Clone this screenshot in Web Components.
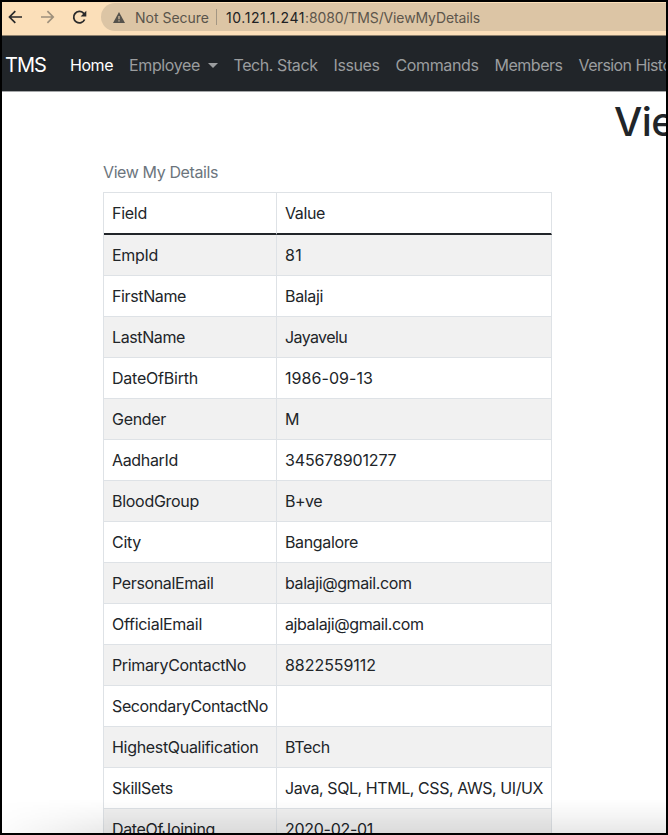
<!DOCTYPE html>
<html lang="en">
<head>
<meta charset="utf-8">
<title>View My Details</title>
<style>
html, body { margin: 0; height: 100%; overflow: hidden; }
body { font-family: Inter, "Liberation Sans", sans-serif; font-size: 16px; color: #212529; }
</style>
</head>
<body>
<tms-window></tms-window>
<script>
function shadow(el, html) {
  el.attachShadow({ mode: "open" }).innerHTML = html;
  return el.shadowRoot;
}

/* A single line of text tracked to an exact width. */
class FitText extends HTMLElement {
  connectedCallback() {
    if (this.shadowRoot) return;
    const root = shadow(this, `<style>
      :host { display: block; flex: none; white-space: nowrap; }
      span { display: inline-block; }
    </style><span><slot></slot></span>`);
    const w = parseFloat(this.getAttribute("w"));
    const span = root.querySelector("span");
    if (w) {
      const natural = span.getBoundingClientRect().width;
      span.style.letterSpacing = (w - natural) / this.textContent.length + "px";
    }
  }
}

class BrowserBar extends HTMLElement {
  connectedCallback() {
    shadow(this, `<style>
      :host { display: flex; height: 34px; box-sizing: border-box; background: #fbdfb9; border-bottom: 1px solid #8d806d; flex: none; padding-top: 1px; }
      svg { display: block; flex: none; }
      .icons { width: 99px; height: 29px; }
      .pill { flex: 1; height: 28px; background: #dcc5a5; border-radius: 14px 0 0 14px; display: flex; align-items: center; padding-left: 12px; font-size: 14px; color: #59544b; }
      .warn { margin-right: 10px; }
      .rule { width: 1px; height: 16px; background: #a39683; margin: 0 9px 0 7px; }
      .host { color: #202124; }
      .path { color: #5d564c; }
    </style>
    <svg class="icons" viewBox="2 3 99 29" fill="none" stroke-width="1.7">
      <path d="M22 17H9.8M15.3 11.2L9.5 17l5.800 5.800" stroke="#29292a"/>
      <path d="M41 17h12M47.400 11.200L53.200 17l-5.800 5.800" stroke="#9e907c"/>
      <path d="M84.600 19.500A5.700 5.700 0 1 1 83.500 13.200L85 14.800" stroke="#29292a" stroke-width="1.800"/>
      <path d="M86.300 10.800v5.700h-5.700z" fill="#29292a"/>
    </svg>
    <div class="pill">
      <svg class="warn" width="12" height="11" viewBox="0 0 12 11"><path d="M6 0l6 11H0z" fill="#55524c"/><path d="M6 4v3.200M6 8.300v1.300" stroke="#dcc5a5" stroke-width="1.200"/></svg>
      <fit-text w="74">Not Secure</fit-text>
      <span class="rule"></span>
      <fit-text class="host" w="79">10.121.1.241</fit-text>
      <fit-text class="path" w="175">:8080/TMS/ViewMyDetails</fit-text>
    </div>`);
  }
}

class NavBar extends HTMLElement {
  connectedCallback() {
    shadow(this, `<style>
      :host { display: flex; align-items: center; height: 56px; flex: none; background: #212529; border-bottom: 1px solid #a5a7a9; box-sizing: border-box; overflow: hidden; padding: 3px 0 0 3px; color: #9b9d9f; }
      .brand { font-size: 20px; color: #fff; margin-right: 24px; }
      .active { color: #fff; }
      fit-text + fit-text { margin-right: 16px; }
      .drop { display: flex; align-items: center; margin-right: 15.500px; }
      .caret { margin-left: 8px; border: 5px solid transparent; border-top-color: currentColor; border-bottom: 0; }
      .link { margin-right: 16px; }
    </style>
    <fit-text class="brand" w="41">TMS</fit-text>
    <fit-text class="active" w="43">Home</fit-text>
    <div class="drop"><fit-text w="71">Employee</fit-text><span class="caret"></span></div>
    <fit-text class="link" w="84">Tech. Stack</fit-text>
    <fit-text class="link" w="46">Issues</fit-text>
    <fit-text class="link" w="83">Commands</fit-text>
    <fit-text class="link" w="68">Members</fit-text>
    <fit-text class="link" w="107">Version History</fit-text>`);
  }
}

class DetailsTable extends HTMLElement {
  connectedCallback() {
    const rows = [
      ["EmpId", 46, "81", 17], ["FirstName", 74, "Balaji", 38], ["LastName", 73, "Jayavelu", 62],
      ["DateOfBirth", 86, "1986-09-13", 88], ["Gender", 54, "M", 14], ["AadharId", 66, "345678901277", 111.5],
      ["BloodGroup", 87, "B+ve", 37], ["City", 29, "Bangalore", 73], ["PersonalEmail", 101.5, "balaji@gmail.com", 126.5],
      ["OfficialEmail", 90, "ajbalaji@gmail.com", 138.5], ["PrimaryContactNo", 134, "8822559112", 91],
      ["SecondaryContactNo", 156, "", 0], ["HighestQualification", 146.5, "BTech", 45],
      ["SkillSets", 61, "Java, SQL, HTML, CSS, AWS, UI/UX", 258], ["DateOfJoining", 103, "2020-02-01", 88]
    ];
    const cell = (t, w) => `<td>${t ? `<fit-text w="${w}">${t}</fit-text>` : ""}</td>`;
    shadow(this, `<style>
      :host { display: block; margin: 7px 0 0 101px; width: 449px; }
      fit-text.caption { color: #6c757d; line-height: 24px; margin-bottom: 8px; }
      table { width: 449px; table-layout: fixed; border-spacing: 0; border: solid #dee2e6; border-width: 1px 0 0 1px; box-sizing: border-box; }
      col:first-child { width: 173px; }
      td { height: 41px; box-sizing: border-box; padding: 0 8px; border: solid #dee2e6; border-width: 0 1px 1px 0; line-height: 24px; }
      thead td { height: 42px; border-bottom: 2px solid #212529; padding-bottom: 1px; }
      tbody tr:nth-child(odd) { background: #f1f1f1; }
    </style>
    <fit-text class="caption" w="115">View My Details</fit-text>
    <table><colgroup><col><col></colgroup>
      <thead><tr>${cell("Field", 35)}${cell("Value", 40)}</tr></thead>
      <tbody>${rows.map(r => `<tr>${cell(r[0], r[1])}${cell(r[2], r[3])}</tr>`).join("")}</tbody>
    </table>`);
  }
}

class TmsWindow extends HTMLElement {
  connectedCallback() {
    shadow(this, `<style>
      :host { display: flex; flex-direction: column; position: relative; box-sizing: border-box; width: 668px; height: 835px; border: 2px solid #000; background: #fff; overflow: hidden; }
      main { flex: 1; min-height: 0; overflow: hidden; }
      h1 { margin: 6px 0 0 612px; font-size: 40px; font-weight: 500; line-height: 48px; white-space: nowrap; height: 55px; }
      .shade { position: absolute; left: 0; right: 0; bottom: 0; height: 34px; background: linear-gradient(#0000, #0000000a 50%, #00000018); -webkit-mask: linear-gradient(90deg, #0002, #000 110px); }
    </style>
    <browser-bar></browser-bar>
    <nav-bar></nav-bar>
    <main><h1><fit-text w="228">View Details</fit-text></h1><details-table></details-table></main>
    <div class="shade"></div>`);
  }
}

customElements.define("fit-text", FitText);
customElements.define("browser-bar", BrowserBar);
customElements.define("nav-bar", NavBar);
customElements.define("details-table", DetailsTable);
customElements.define("tms-window", TmsWindow);
</script>
</body>
</html>
